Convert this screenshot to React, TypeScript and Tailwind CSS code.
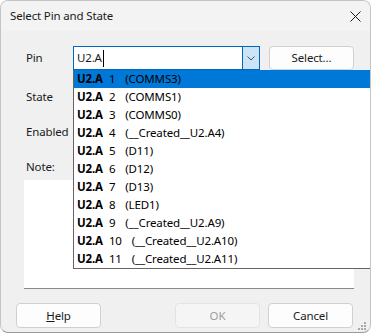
import React from "react";

const rows = [
  ["1", "(COMMS3)"],
  ["2", "(COMMS1)"],
  ["3", "(COMMS0)"],
  ["4", "(__Created__U2.A4)"],
  ["5", "(D11)"],
  ["6", "(D12)"],
  ["7", "(D13)"],
  ["8", "(LED1)"],
  ["9", "(__Created__U2.A9)"],
  ["10", "(__Created__U2.A10)"],
  ["11", "(__Created__U2.A11)"],
];

export default function App() {
  return (
    <div className="w-[371px] h-[333px] bg-white">
      <div className="relative w-[371px] h-[333px] bg-[#f0f0f0] rounded-[8px] border border-[#c4c4c4] border-b-[#9a9a9a] overflow-hidden font-['Noto_Sans',sans-serif] text-[11.5px] tracking-[-0.15px] text-[#1a1a1a] flex flex-col">
        <div className="h-[30px] shrink-0 bg-[#f3f3f3] flex items-center justify-between pl-[9px] pr-[9px]">
          <span className="leading-none">Select Pin and State</span>
          <svg width="11" height="11" viewBox="0 0 11 11">
            <path d="M0.5 0.5 L10.5 10.5 M10.5 0.5 L0.5 10.5" stroke="#1a1a1a" strokeWidth="1" />
          </svg>
        </div>

        <div className="flex items-center h-[24px] mt-[15px] pl-[25px]">
          <span className="w-[47px]">Pin</span>
          <div className="w-[187px] h-[24px] bg-white border border-[#0067c0] flex">
            <div className="flex-1 flex items-center pl-[3px]">
              <span>U2.A</span>
              <span className="w-px h-[17px] bg-black ml-[1px]" />
            </div>
            <div className="w-[17px] h-full bg-[#cce4f7] border-l border-[#0067c0] flex items-center justify-center">
              <svg width="8" height="5" viewBox="0 0 8 5">
                <path d="M0.5 0.5 L4 4 L7.5 0.5" stroke="#505050" strokeWidth="1" fill="none" />
              </svg>
            </div>
          </div>
          <button className="ml-[9px] -mt-[1px] w-[85px] h-[24px] rounded-[4px] border border-[#d0d0d0] bg-[#fdfdfd] flex items-center justify-center">
            Select...
          </button>
        </div>

        <div className="flex items-center h-[24px] mt-[15px] pl-[25px]">State</div>
        <div className="flex items-center h-[24px] mt-[11px] pl-[25px]">Enabled</div>
        <div className="flex items-center h-[24px] mt-[11px] pl-[25px]">Note:</div>

        <div className="ml-[23px] mt-[1px] w-[330px] h-[109px] bg-white border-b border-[#8a8a8a]" />

        <div className="flex items-center mt-[14px] pl-[15px]">
          <button className="w-[85px] h-[25px] rounded-[4px] border border-[#d0d0d0] bg-[#fdfdfd] flex items-center justify-center">
            <span><span className="underline">H</span>elp</span>
          </button>
          <button className="ml-[74px] w-[85px] h-[25px] rounded-[4px] border border-[#e3e3e3] bg-[#f5f5f5] text-[#9d9d9d] flex items-center justify-center">
            OK
          </button>
          <button className="ml-[8px] w-[85px] h-[25px] rounded-[4px] border border-[#d0d0d0] bg-[#fdfdfd] flex items-center justify-center">
            Cancel
          </button>
        </div>

        <svg className="absolute right-[4px] bottom-[2px]" width="8" height="8" viewBox="0 0 8 8">
          <rect x="6" y="0" width="2" height="2" fill="#a8a8a8" />
          <rect x="3" y="3" width="2" height="2" fill="#a8a8a8" />
          <rect x="6" y="3" width="2" height="2" fill="#a8a8a8" />
          <rect x="0" y="6" width="2" height="2" fill="#a8a8a8" />
          <rect x="3" y="6" width="2" height="2" fill="#a8a8a8" />
          <rect x="6" y="6" width="2" height="2" fill="#a8a8a8" />
        </svg>

        <div className="absolute left-[72px] top-[69px] w-[298px] bg-white border-l border-r border-b border-[#646464] flex flex-col">
          {rows.map(([n, t], i) => (
            <div
              key={n}
              className={
                i === 0
                  ? "h-[18px] flex items-center pl-[3px] bg-[#0078d7] text-black whitespace-nowrap"
                  : "h-[18px] flex items-center pl-[3px] text-black whitespace-nowrap"
              }
            >
              <span className="font-bold">U2.A</span>
              <span className="ml-[6px]">{n}</span>
              <span className="ml-[10px]">{t}</span>
            </div>
          ))}
        </div>
      </div>
    </div>
  );
}
